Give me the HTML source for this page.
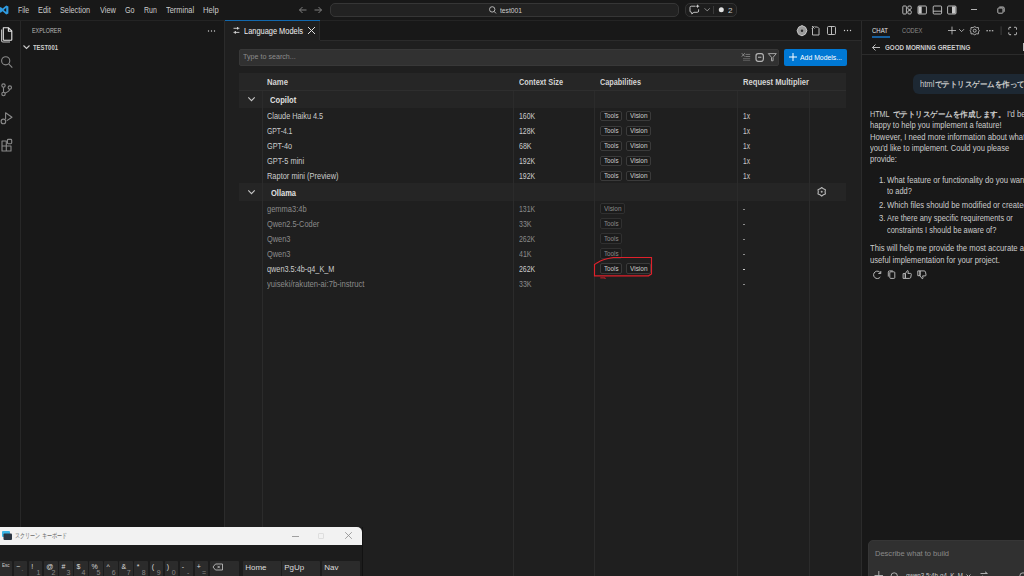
<!DOCTYPE html>
<html><head><meta charset="utf-8"><style>
html,body{margin:0;padding:0;width:1024px;height:576px;overflow:hidden;background:#181818;}
body{position:relative;font-family:"Liberation Sans", sans-serif;}
.a{position:absolute;}
.t{position:absolute;white-space:nowrap;line-height:1;transform-origin:0 50%;}
svg.a{overflow:visible;}
</style></head><body>
<div class="a" style="left:0px;top:0px;width:1024px;height:576px;background:#181818;"></div>
<div class="a" style="left:0px;top:20px;width:1024px;height:1px;background:#242424;"></div>
<div class="a" style="left:20px;top:21px;width:1px;height:555px;background:#272727;"></div>
<div class="a" style="left:224px;top:21px;width:1px;height:555px;background:#2b2b2b;"></div>
<div class="a" style="left:225px;top:40px;width:637px;height:536px;background:#1f1f1f;"></div>
<div class="a" style="left:225px;top:40px;width:637px;height:1px;background:#2b2b2b;"></div>
<div class="a" style="left:225px;top:20px;width:95px;height:21px;background:#1f1f1f;"></div>
<div class="a" style="left:225px;top:20px;width:95px;height:1px;background:#1268ad;"></div>
<div class="a" style="left:319px;top:21px;width:1px;height:19px;background:#2b2b2b;"></div>
<div class="a" style="left:861px;top:21px;width:1px;height:555px;background:#2b2b2b;"></div>
<svg class="a" style="left:0;top:0" width="12" height="20" viewBox="0 0 12 20"><path d="M6.2 5.4 L8.4 6.4 V13.4 L6.2 14.5 L2.6 11.3 L0.6 12.8 L-0.6 12.2 V7.7 L0.6 7.1 L2.6 8.6 Z M6.2 7.8 L3.7 9.95 L6.2 12.1 Z" fill="#2f9be0" fill-rule="evenodd"/></svg>
<svg class="a" style="left:298px;top:5px" width="26" height="10" viewBox="0 0 26 10"><path d="M1.5 5 H8.5 M1.5 5 L4.5 2 M1.5 5 L4.5 8" stroke="#8a8a8a" stroke-width="0.9" fill="none"/><path d="M23.5 5 H16.5 M23.5 5 L20.5 2 M23.5 5 L20.5 8" stroke="#8a8a8a" stroke-width="0.9" fill="none"/></svg>
<div class="a" style="left:330px;top:3px;width:349px;height:14px;background:#222222;border:1px solid #363636;box-sizing:border-box;border-radius:5px;"></div>
<svg class="a" style="left:487px;top:5px" width="10" height="10" viewBox="0 0 10 10"><circle cx="5.2" cy="4.4" r="2.7" stroke="#c4c4c4" stroke-width="0.9" fill="none"/><path d="M7.1 6.4 L9 8.4" stroke="#c4c4c4" stroke-width="0.9"/></svg>
<div class="a" style="left:685px;top:3px;width:52px;height:14px;background:#1d1d1d;border:1px solid #333333;box-sizing:border-box;border-radius:5px;"></div>
<svg class="a" style="left:0;top:0" width="740" height="20" viewBox="0 0 740 20"><path d="M695.5 6.2 H691.3 Q690 6.2 690 7.5 V11 Q690 12.3 691.3 12.3 H691.8 V14 L693.9 12.3 H697.3 Q698.6 12.3 698.6 11 V9.3" stroke="#d4d4d4" stroke-width="0.9" fill="none" stroke-linejoin="round"/><path d="M697.6 4.2 L698.2 5.6 L699.6 6.2 L698.2 6.8 L697.6 8.2 L697 6.8 L695.6 6.2 L697 5.6 Z" fill="#d4d4d4"/></svg>
<svg class="a" style="left:703px;top:7px" width="8" height="6" viewBox="0 0 8 6"><path d="M1.6 1.3 L4.2 3.9 L6.8 1.3" stroke="#aaaaaa" stroke-width="0.8" fill="none"/></svg>
<div class="a" style="left:713px;top:6px;width:1px;height:8px;background:#3a3a3a;"></div>
<svg class="a" style="left:718px;top:7px" width="7" height="7" viewBox="0 0 7 7"><circle cx="3.3" cy="2.8" r="2.5" fill="#e0e0e0"/></svg>
<svg class="a" style="left:900px;top:4px" width="60" height="12" viewBox="0 0 60 12">
<g stroke="#c8c8c8" stroke-width="0.9" fill="none">
<rect x="2.8" y="2" width="3.6" height="8" rx="0.8"/><rect x="7.8" y="2" width="3.5" height="3.4" rx="1.2"/><rect x="7.8" y="6.6" width="3.5" height="3.4" rx="1.2"/>
<rect x="18" y="2" width="8.4" height="8" rx="1"/>
<rect x="33.2" y="2" width="8.4" height="8" rx="1"/><path d="M33.2 7.2 H41.6"/>
<rect x="47.6" y="2" width="8.4" height="8" rx="1"/>
</g>
<rect x="18.5" y="2.5" width="3.2" height="7" fill="#c8c8c8"/>
<rect x="52" y="2.5" width="3.5" height="7" fill="#c8c8c8"/>
</svg>
<div class="a" style="left:971.4px;top:9px;width:5.8px;height:1px;background:#b4b4b4;"></div>
<svg class="a" style="left:996px;top:5px" width="10" height="10" viewBox="0 0 10 10"><rect x="1.8" y="3" width="5.2" height="5.2" rx="0.8" stroke="#c8c8c8" stroke-width="0.9" fill="none"/><path d="M3.3 2 H7 Q8.2 2 8.2 3.2 V6.8" stroke="#c8c8c8" stroke-width="0.9" fill="none"/></svg>
<svg class="a" style="left:0;top:0" width="20" height="160" viewBox="0 0 20 160">
<g fill="none" stroke-width="1.1" stroke-linejoin="round">
<path d="M3.3 27.8 H8.6 L11.8 31 V39.6 Q11.8 40.3 11.1 40.3 H4 Q3.3 40.3 3.3 39.6 Z" stroke="#e6e6e6"/>
<path d="M8.4 27.8 V31.2 H11.8" stroke="#e6e6e6"/>
<path d="M1.6 29.5 V40.5 Q1.6 42 3 42 H10" stroke="#bfbfbf"/>
<circle cx="5.7" cy="60.8" r="4.1" stroke="#8a8a8a"/><path d="M8.7 63.9 L12.3 67.6" stroke="#8a8a8a"/>
<circle cx="3.5" cy="85.6" r="1.7" stroke="#8a8a8a"/><circle cx="3.5" cy="94" r="1.7" stroke="#8a8a8a"/><circle cx="9.8" cy="87.6" r="1.7" stroke="#8a8a8a"/><path d="M3.5 87.3 V92.3 M9.8 89.3 Q9.6 91.2 5 93.2" stroke="#8a8a8a"/>
<path d="M5.6 119 V112.8 L12 117.3 L6.8 120.6" stroke="#8a8a8a"/><circle cx="3.4" cy="121.4" r="2.3" stroke="#8a8a8a"/>
<path d="M2 141 H6.3 V151 H2 Z M2 146 H11 V151 H6.3" stroke="#8a8a8a"/><rect x="7.4" y="139.4" width="4.3" height="4.3" rx="0.9" stroke="#8a8a8a"/>
</g></svg>
<svg class="a" style="left:206px;top:28px" width="12" height="6" viewBox="0 0 12 6"><circle cx="2.5" cy="3" r="0.7" fill="#cccccc"/><circle cx="5.5" cy="3" r="0.7" fill="#cccccc"/><circle cx="8.5" cy="3" r="0.7" fill="#cccccc"/></svg>
<svg class="a" style="left:22px;top:43px" width="9" height="8" viewBox="0 0 9 8"><path d="M1.5 2.5 L4.5 5.5 L7.5 2.5" stroke="#cccccc" stroke-width="1.1" fill="none"/></svg>
<svg class="a" style="left:0;top:0" width="260" height="40" viewBox="0 0 260 40"><path d="M233.5 28.3 H239.4 M233.5 32.4 H239.4" stroke="#d8d8d8" stroke-width="0.9"/><path d="M237.6 27 V29.6 M235.3 31.1 V33.7" stroke="#d8d8d8" stroke-width="1.1"/></svg>
<svg class="a" style="left:307px;top:26px" width="9" height="9" viewBox="0 0 9 9"><path d="M1 1 L8 8 M8 1 L1 8" stroke="#e0e0e0" stroke-width="1"/></svg>
<svg class="a" style="left:794px;top:24px" width="60" height="13" viewBox="0 0 60 13">
<g fill="none" stroke="#cccccc" stroke-width="0.9">
<path d="M8 1.6 L11.6 3.3 L12.9 6.7 L11.3 10.2 L8 11.8 L4.5 10.3 L3.1 6.7 L4.6 3.2 Z" fill="#9a9a9a" stroke="#c8c8c8" stroke-width="1" stroke-linejoin="round"/><circle cx="8" cy="6.7" r="1.2" fill="#2a2a2a" stroke="none"/>
<path d="M18.5 4 L18.5 11 H25 V4.5 L23.5 3 H21" /><path d="M18 2 L20.5 4.5 M18 4.5 L20.5 2"/>
<rect x="33.5" y="2.5" width="8" height="8" rx="1"/><path d="M37.5 2.5 V10.5"/>
</g>
<circle cx="50.5" cy="6.5" r="0.7" fill="#cccccc"/><circle cx="53.5" cy="6.5" r="0.7" fill="#cccccc"/><circle cx="56.5" cy="6.5" r="0.7" fill="#cccccc"/>
</svg>
<div class="a" style="left:239px;top:48.6px;width:540px;height:17.5px;background:#313131;border:1px solid #383838;box-sizing:border-box;border-radius:2px;"></div>
<svg class="a" style="left:0;top:0" width="1024" height="80" viewBox="0 0 1024 80">
<g fill="none" stroke-width="0.8">
<path d="M741.8 53.2 L744.8 56.6 M744.8 53.2 L741.8 56.6" stroke="#9a9a9a"/>
<path d="M745.5 54.4 H750.2 M745.5 56.5 H750.2" stroke="#8a8a8a"/>
<path d="M743 58.6 H750.2 M743 60.3 H750.2" stroke="#6a6a6a"/>
<rect x="756" y="53.7" width="7.4" height="7.6" rx="2.2" stroke="#b4b4b4" stroke-width="1.2"/>
<path d="M758 57.3 H761.4" stroke="#9a9a9a" stroke-width="1.3"/>
<path d="M768.3 53.6 H776.3 L773.1 57.3 V60.8 H771.5 V57.3 Z" stroke="#b0b0b0" stroke-width="0.9" stroke-linejoin="round"/>
</g></svg>
<div class="a" style="left:784px;top:49px;width:63px;height:17px;background:#0078d4;border-radius:2px;"></div>
<svg class="a" style="left:788px;top:52px" width="10" height="10" viewBox="0 0 10 10"><path d="M5 1 V9 M1 5 H9" stroke="#ffffff" stroke-width="1"/></svg>
<div class="a" style="left:239px;top:73px;width:607px;height:17.5px;background:#262626;"></div>
<div class="a" style="left:239px;top:90px;width:607px;height:1px;background:#2e2e2e;"></div>
<div class="a" style="left:239px;top:90.5px;width:607px;height:17.2px;background:#252525;"></div>
<div class="a" style="left:239px;top:183px;width:607px;height:17.7px;background:#252525;"></div>
<div class="a" style="left:262px;top:90.5px;width:1px;height:486px;background:#2b2b2b;"></div>
<div class="a" style="left:513px;top:90.5px;width:1px;height:486px;background:#2b2b2b;"></div>
<div class="a" style="left:594px;top:90.5px;width:1px;height:486px;background:#2b2b2b;"></div>
<div class="a" style="left:737px;top:90.5px;width:1px;height:486px;background:#2b2b2b;"></div>
<div class="a" style="left:809px;top:90.5px;width:1px;height:486px;background:#2b2b2b;"></div>
<svg class="a" style="left:247px;top:94.7px" width="9" height="8" viewBox="0 0 9 8"><path d="M1.3 2.4 L4.5 5.6 L7.7 2.4" stroke="#c8c8c8" stroke-width="1.1" fill="none"/></svg>
<svg class="a" style="left:247px;top:188px" width="9" height="8" viewBox="0 0 9 8"><path d="M1.3 2.4 L4.5 5.6 L7.7 2.4" stroke="#c8c8c8" stroke-width="1.1" fill="none"/></svg>
<svg class="a" style="left:0;top:0" width="1024" height="300" viewBox="0 0 1024 300"><path d="M821.70 187.50 L823.40 188.86 L825.42 189.65 L825.10 191.80 L825.42 193.95 L823.40 194.74 L821.70 196.10 L820.00 194.74 L817.98 193.95 L818.30 191.80 L817.98 189.65 L820.00 188.86 Z" stroke="#b8b8b8" stroke-width="1.1" fill="none" stroke-linejoin="round"/><circle cx="821.7" cy="191.8" r="1" fill="#b0b0b0"/></svg>
<div class="a" style="left:599.6px;top:110.60000000000001px;width:22.7px;height:10.4px;background:#1b1b1b;border:1px solid #3a3a3a;box-sizing:border-box;border-radius:2px;"></div>
<div class="a" style="left:625.5px;top:110.60000000000001px;width:25px;height:10.4px;background:#1b1b1b;border:1px solid #3a3a3a;box-sizing:border-box;border-radius:2px;"></div>
<div class="a" style="left:599.6px;top:125.60000000000001px;width:22.7px;height:10.4px;background:#1b1b1b;border:1px solid #3a3a3a;box-sizing:border-box;border-radius:2px;"></div>
<div class="a" style="left:625.5px;top:125.60000000000001px;width:25px;height:10.4px;background:#1b1b1b;border:1px solid #3a3a3a;box-sizing:border-box;border-radius:2px;"></div>
<div class="a" style="left:599.6px;top:140.6px;width:22.7px;height:10.4px;background:#1b1b1b;border:1px solid #3a3a3a;box-sizing:border-box;border-radius:2px;"></div>
<div class="a" style="left:625.5px;top:140.6px;width:25px;height:10.4px;background:#1b1b1b;border:1px solid #3a3a3a;box-sizing:border-box;border-radius:2px;"></div>
<div class="a" style="left:599.6px;top:155.6px;width:22.7px;height:10.4px;background:#1b1b1b;border:1px solid #3a3a3a;box-sizing:border-box;border-radius:2px;"></div>
<div class="a" style="left:625.5px;top:155.6px;width:25px;height:10.4px;background:#1b1b1b;border:1px solid #3a3a3a;box-sizing:border-box;border-radius:2px;"></div>
<div class="a" style="left:599.6px;top:170.6px;width:22.7px;height:10.4px;background:#1b1b1b;border:1px solid #3a3a3a;box-sizing:border-box;border-radius:2px;"></div>
<div class="a" style="left:625.5px;top:170.6px;width:25px;height:10.4px;background:#1b1b1b;border:1px solid #3a3a3a;box-sizing:border-box;border-radius:2px;"></div>
<div class="a" style="left:599.6px;top:203.39999999999998px;width:25px;height:10.4px;background:#1b1b1b;border:1px solid #303030;box-sizing:border-box;border-radius:2px;"></div>
<div class="a" style="left:743.3px;top:209.2px;width:2.2px;height:0.8px;background:#8b8b8b;"></div>
<div class="a" style="left:599.6px;top:218.39999999999998px;width:22.7px;height:10.4px;background:#1b1b1b;border:1px solid #303030;box-sizing:border-box;border-radius:2px;"></div>
<div class="a" style="left:743.3px;top:224.2px;width:2.2px;height:0.8px;background:#8b8b8b;"></div>
<div class="a" style="left:599.6px;top:233.39999999999998px;width:22.7px;height:10.4px;background:#1b1b1b;border:1px solid #303030;box-sizing:border-box;border-radius:2px;"></div>
<div class="a" style="left:743.3px;top:239.2px;width:2.2px;height:0.8px;background:#8b8b8b;"></div>
<div class="a" style="left:599.6px;top:248.39999999999998px;width:22.7px;height:10.4px;background:#1b1b1b;border:1px solid #303030;box-sizing:border-box;border-radius:2px;"></div>
<div class="a" style="left:743.3px;top:254.2px;width:2.2px;height:0.8px;background:#8b8b8b;"></div>
<div class="a" style="left:599.6px;top:263.4px;width:22.7px;height:10.4px;background:#1b1b1b;border:1px solid #3a3a3a;box-sizing:border-box;border-radius:2px;"></div>
<div class="a" style="left:625.5px;top:263.4px;width:25px;height:10.4px;background:#1b1b1b;border:1px solid #3a3a3a;box-sizing:border-box;border-radius:2px;"></div>
<div class="a" style="left:743.3px;top:269.2px;width:2.2px;height:0.8px;background:#cccccc;"></div>
<div class="a" style="left:743.3px;top:284.2px;width:2.2px;height:0.8px;background:#8b8b8b;"></div>
<svg class="a" style="left:0;top:0" width="1024" height="576" viewBox="0 0 1024 576" ><path d="M613.5 257.5 H651.5 V273.9 L648.5 275.8 H594.5 V264.6 L596.9 262.9 L600.3 260.9 L603.5 259.8 L607.1 258.8 L610.5 258 Z" stroke="#e0212b" stroke-width="1.15" fill="none" stroke-linejoin="miter"/><path d="M600.3 277.9 H605.1 V279" stroke="#c8202a" stroke-width="1" fill="none"/></svg>
<div class="a" style="left:871.5px;top:36.4px;width:18px;height:1.2px;background:#17609e;"></div>
<svg class="a" style="left:0;top:0" width="1024" height="60" viewBox="0 0 1024 60">
<g fill="none" stroke="#cccccc" stroke-width="0.8">
<path d="M952 26.6 V34.4 M948 30.5 H956"/>
<path d="M959.2 29.2 L961.6 31.6 L964 29.2"/>
<circle cx="974.7" cy="30.7" r="1.5"/>
<path d="M974.7 26.6 L976.4 27.6 L978.4 27.5 L978.5 29.5 L979.3 30.7 L978.5 31.9 L978.4 33.9 L976.4 33.8 L974.7 34.8 L973 33.8 L971 33.9 L970.9 31.9 L970.1 30.7 L970.9 29.5 L971 27.5 L973 27.6 Z" stroke-linejoin="round"/>
<path d="M1001.1 26.4 V35" stroke="#3e3e3e" stroke-width="1"/>
<path d="M1008.8 29.6 V28.2 Q1008.8 27.3 1009.7 27.3 H1011.1 M1014.2 27.3 H1015.6 Q1016.5 27.3 1016.5 28.2 V29.6 M1016.5 32.4 V33.8 Q1016.5 34.7 1015.6 34.7 H1014.2 M1011.1 34.7 H1009.7 Q1008.8 34.7 1008.8 33.8 V32.4" stroke-width="1"/>
</g>
<rect x="986.4" y="30.2" width="1.5" height="1.1" fill="#cccccc"/><rect x="989.1" y="30.2" width="1.5" height="1.1" fill="#cccccc"/><rect x="991.8" y="30.2" width="1.5" height="1.1" fill="#cccccc"/>
</svg>
<svg class="a" style="left:871px;top:43px" width="10" height="9" viewBox="0 0 10 9"><path d="M1.5 4.5 H9 M1.5 4.5 L4.5 1.5 M1.5 4.5 L4.5 7.5" stroke="#cccccc" stroke-width="0.9" fill="none"/></svg>
<div class="a" style="left:1022.5px;top:43.4px;width:2px;height:7.4px;background:#bdbdbd;"></div>
<div class="a" style="left:862px;top:54px;width:162px;height:1px;background:#2b2b2b;"></div>
<div class="a" style="left:912.7px;top:73.6px;width:130px;height:20.8px;background:#1d2833;border-radius:6px;"></div>
<svg class="a" style="left:0;top:0" width="1024" height="300" viewBox="0 0 1024 300">
<g fill="none" stroke="#c4c4c4" stroke-width="0.9" stroke-linejoin="round">
<path d="M880.6 273.2 A3.7 3.7 0 1 0 880.3 277"/><path d="M880.8 271 V273.5 H878.3"/>
<rect x="889.8" y="271.8" width="5" height="6.6" rx="0.9"/><path d="M888.3 276.6 V272.2 Q888.3 270.9 889.6 270.9 H892.8"/>
<path d="M905.3 278.4 H909.4 Q910.6 278.4 910.8 277.2 L911.3 274.4 Q911.4 273.4 910.4 273.4 H907.9 L908.3 271.6 Q908.3 270.5 907.4 270.6 L905.3 273.6 Z M903.1 273.6 H905.3 V278.4 H903.1 Z"/>
<path d="M920 270.9 H924.1 Q925.3 270.9 925.5 272.1 L926 274.9 Q926.1 275.9 925.1 275.9 H922.6 L923 277.7 Q923 278.8 922.1 278.7 L920 275.7 Z M917.8 270.9 H920 V275.7 H917.8 Z"/>
</g></svg>
<div class="a" style="left:868px;top:540px;width:170px;height:50px;background:#303030;border:1px solid #363636;box-sizing:border-box;border-radius:5px;"></div>
<svg class="a" style="left:0;top:0" width="1024" height="576" viewBox="0 0 1024 576">
<g fill="none" stroke="#bbbbbb" stroke-width="0.9">
<path d="M878.8 571 V580 M874.5 575.5 H883"/>
<circle cx="894.2" cy="576" r="3.2"/>
<path d="M966.5 574.5 L968.5 576.5 L970.5 574.5" />
<path d="M980.5 573.5 H987.4 M985 571.8 L987.4 573.5 M980.5 577.5 H987.4 M982.9 575.8 L980.5 577.5"/>
<circle cx="1023" cy="576" r="3.2"/>
</g></svg>
<div class="a" style="left:0px;top:527px;width:362px;height:49px;background:#1c1c1c;border-radius:0 5px 0 0;"></div>
<div class="a" style="left:0px;top:527px;width:362px;height:17.5px;background:#f2f2f2;border-radius:0 5px 0 0;"></div>
<svg class="a" style="left:1px;top:530px" width="12" height="11" viewBox="0 0 12 11"><rect x="1" y="1" width="8" height="6" rx="1" fill="#3ab5e6"/><rect x="2.5" y="3.5" width="8.5" height="6.5" rx="1" fill="#2a3542"/></svg>
<div class="a" style="left:292px;top:535.6px;width:6.6px;height:0.8px;background:#a0a0a0;"></div>
<div class="a" style="left:318px;top:532.5px;width:6px;height:6px;border:1px solid #dedede;box-sizing:border-box;border-radius:1px;"></div>
<svg class="a" style="left:344px;top:531px" width="9" height="9" viewBox="0 0 9 9"><path d="M1.2 1.2 L7.8 7.8 M7.8 1.2 L1.2 7.8" stroke="#8c8c8c" stroke-width="0.8"/></svg>
<div class="a" style="left:362px;top:527px;width:1px;height:49px;background:#121212;"></div>
<div class="a" style="left:-1.0px;top:561.2px;width:13px;height:20px;background:#2b2b2b;border-radius:1px;"></div>
<div class="a" style="left:14.05px;top:561.2px;width:13.4px;height:20px;background:#2b2b2b;border-radius:1px;"></div>
<div class="a" style="left:29.1px;top:561.2px;width:13.4px;height:20px;background:#2b2b2b;border-radius:1px;"></div>
<div class="a" style="left:44.150000000000006px;top:561.2px;width:13.4px;height:20px;background:#2b2b2b;border-radius:1px;"></div>
<div class="a" style="left:59.2px;top:561.2px;width:13.4px;height:20px;background:#2b2b2b;border-radius:1px;"></div>
<div class="a" style="left:74.25px;top:561.2px;width:13.4px;height:20px;background:#2b2b2b;border-radius:1px;"></div>
<div class="a" style="left:89.30000000000001px;top:561.2px;width:13.4px;height:20px;background:#2b2b2b;border-radius:1px;"></div>
<div class="a" style="left:104.35000000000001px;top:561.2px;width:13.4px;height:20px;background:#2b2b2b;border-radius:1px;"></div>
<div class="a" style="left:119.4px;top:561.2px;width:13.4px;height:20px;background:#2b2b2b;border-radius:1px;"></div>
<div class="a" style="left:134.45000000000002px;top:561.2px;width:13.4px;height:20px;background:#2b2b2b;border-radius:1px;"></div>
<div class="a" style="left:149.5px;top:561.2px;width:13.4px;height:20px;background:#2b2b2b;border-radius:1px;"></div>
<div class="a" style="left:164.55px;top:561.2px;width:13.4px;height:20px;background:#2b2b2b;border-radius:1px;"></div>
<div class="a" style="left:179.60000000000002px;top:561.2px;width:13.4px;height:20px;background:#2b2b2b;border-radius:1px;"></div>
<div class="a" style="left:194.65px;top:561.2px;width:13.4px;height:20px;background:#2b2b2b;border-radius:1px;"></div>
<div class="a" style="left:210px;top:561.2px;width:28.6px;height:20px;background:#2b2b2b;border-radius:1px;"></div>
<svg class="a" style="left:212px;top:563px" width="12" height="8" viewBox="0 0 12 8"><path d="M3.5 1 H10.5 V7 H3.5 L1 4 Z M5.5 2.8 L7.8 5.2 M7.8 2.8 L5.5 5.2" stroke="#cccccc" stroke-width="0.8" fill="none"/></svg>
<div class="a" style="left:243px;top:561.2px;width:37.5px;height:20px;background:#2b2b2b;border-radius:1px;"></div>
<div class="a" style="left:282px;top:561.2px;width:37.5px;height:20px;background:#2b2b2b;border-radius:1px;"></div>
<div class="a" style="left:322px;top:561.2px;width:38px;height:20px;background:#2b2b2b;border-radius:1px;"></div>
<div class="t" id="t0" style="left:17.60px;top:5.65px;font-size:8.6px;color:#cccccc;font-weight:normal;transform:scaleX(0.8081);">File</div>
<div class="t" id="t1" style="left:38.20px;top:5.65px;font-size:8.6px;color:#cccccc;font-weight:normal;transform:scaleX(0.8574);">Edit</div>
<div class="t" id="t2" style="left:60.20px;top:5.65px;font-size:8.6px;color:#cccccc;font-weight:normal;transform:scaleX(0.8484);">Selection</div>
<div class="t" id="t3" style="left:99.60px;top:5.65px;font-size:8.6px;color:#cccccc;font-weight:normal;transform:scaleX(0.8602);">View</div>
<div class="t" id="t4" style="left:124.70px;top:5.65px;font-size:8.6px;color:#cccccc;font-weight:normal;transform:scaleX(0.8371);">Go</div>
<div class="t" id="t5" style="left:143.70px;top:5.65px;font-size:8.6px;color:#cccccc;font-weight:normal;transform:scaleX(0.8119);">Run</div>
<div class="t" id="t6" style="left:165.90px;top:5.65px;font-size:8.6px;color:#cccccc;font-weight:normal;transform:scaleX(0.8650);">Terminal</div>
<div class="t" id="t7" style="left:203.40px;top:5.65px;font-size:8.6px;color:#cccccc;font-weight:normal;transform:scaleX(0.8876);">Help</div>
<div class="t" id="t8" style="left:500.00px;top:6.70px;font-size:8px;color:#cccccc;font-weight:normal;transform:scaleX(0.8381);">test001</div>
<div class="t" id="t9" style="left:728.00px;top:6.70px;font-size:8px;color:#cccccc;font-weight:normal;transform:scaleX(1.0105);">2</div>
<div class="t" id="t10" style="left:32.10px;top:27.15px;font-size:7.2px;color:#bbbbbb;font-weight:normal;transform:scaleX(0.7483);">EXPLORER</div>
<div class="t" id="t11" style="left:32.50px;top:44.00px;font-size:7px;color:#cccccc;font-weight:bold;transform:scaleX(0.8452);">TEST001</div>
<div class="t" id="t12" style="left:243.90px;top:27.30px;font-size:8.4px;color:#f0f0f0;font-weight:normal;transform:scaleX(0.8860);">Language Models</div>
<div class="t" id="t13" style="left:243.10px;top:53.40px;font-size:7.8px;color:#8c8c8c;font-weight:normal;transform:scaleX(0.9160);">Type to search...</div>
<div class="t" id="t14" style="left:800.00px;top:54.35px;font-size:7.5px;color:#ffffff;font-weight:normal;transform:scaleX(0.9158);">Add Models...</div>
<div class="t" id="t15" style="left:267.00px;top:78.65px;font-size:8.2px;color:#d4d4d4;font-weight:bold;transform:scaleX(0.9412);">Name</div>
<div class="t" id="t16" style="left:518.70px;top:78.65px;font-size:8.2px;color:#d4d4d4;font-weight:bold;transform:scaleX(0.8954);">Context Size</div>
<div class="t" id="t17" style="left:599.50px;top:78.65px;font-size:8.2px;color:#d4d4d4;font-weight:bold;transform:scaleX(0.8919);">Capabilities</div>
<div class="t" id="t18" style="left:743.00px;top:78.65px;font-size:8.2px;color:#d4d4d4;font-weight:bold;transform:scaleX(0.9300);">Request Multiplier</div>
<div class="t" id="t19" style="left:270.30px;top:95.80px;font-size:8.4px;color:#e0e0e0;font-weight:bold;transform:scaleX(0.9083);">Copilot</div>
<div class="t" id="t20" style="left:270.50px;top:188.90px;font-size:8.4px;color:#e0e0e0;font-weight:bold;transform:scaleX(0.8949);">Ollama</div>
<div class="t" id="t21" style="left:266.90px;top:113.30px;font-size:8.2px;color:#cccccc;font-weight:normal;transform:scaleX(0.8947);">Claude Haiku 4.5</div>
<div class="t" id="t22" style="left:518.80px;top:113.30px;font-size:8.2px;color:#cccccc;font-weight:normal;transform:scaleX(0.8418);">160K</div>
<div class="t" id="t23" style="left:603.80px;top:112.20px;font-size:7.2px;color:#cccccc;font-weight:normal;transform:scaleX(0.8641);">Tools</div>
<div class="t" id="t24" style="left:629.50px;top:112.20px;font-size:7.2px;color:#cccccc;font-weight:normal;transform:scaleX(0.8996);">Vision</div>
<div class="t" id="t25" style="left:743.30px;top:113.30px;font-size:8.2px;color:#cccccc;font-weight:normal;transform:scaleX(0.8087);">1x</div>
<div class="t" id="t26" style="left:266.90px;top:128.30px;font-size:8.2px;color:#cccccc;font-weight:normal;transform:scaleX(0.8328);">GPT-4.1</div>
<div class="t" id="t27" style="left:518.80px;top:128.30px;font-size:8.2px;color:#cccccc;font-weight:normal;transform:scaleX(0.8418);">128K</div>
<div class="t" id="t28" style="left:603.80px;top:127.20px;font-size:7.2px;color:#cccccc;font-weight:normal;transform:scaleX(0.8641);">Tools</div>
<div class="t" id="t29" style="left:629.50px;top:127.20px;font-size:7.2px;color:#cccccc;font-weight:normal;transform:scaleX(0.8996);">Vision</div>
<div class="t" id="t30" style="left:743.30px;top:128.30px;font-size:8.2px;color:#cccccc;font-weight:normal;transform:scaleX(0.8087);">1x</div>
<div class="t" id="t31" style="left:266.90px;top:143.30px;font-size:8.2px;color:#cccccc;font-weight:normal;transform:scaleX(0.8859);">GPT-4o</div>
<div class="t" id="t32" style="left:518.80px;top:143.30px;font-size:8.2px;color:#cccccc;font-weight:normal;transform:scaleX(0.8643);">68K</div>
<div class="t" id="t33" style="left:603.80px;top:142.20px;font-size:7.2px;color:#cccccc;font-weight:normal;transform:scaleX(0.8641);">Tools</div>
<div class="t" id="t34" style="left:629.50px;top:142.20px;font-size:7.2px;color:#cccccc;font-weight:normal;transform:scaleX(0.8996);">Vision</div>
<div class="t" id="t35" style="left:743.30px;top:143.30px;font-size:8.2px;color:#cccccc;font-weight:normal;transform:scaleX(0.8087);">1x</div>
<div class="t" id="t36" style="left:266.90px;top:158.30px;font-size:8.2px;color:#cccccc;font-weight:normal;transform:scaleX(0.9059);">GPT-5 mini</div>
<div class="t" id="t37" style="left:518.80px;top:158.30px;font-size:8.2px;color:#cccccc;font-weight:normal;transform:scaleX(0.8418);">192K</div>
<div class="t" id="t38" style="left:603.80px;top:157.20px;font-size:7.2px;color:#cccccc;font-weight:normal;transform:scaleX(0.8641);">Tools</div>
<div class="t" id="t39" style="left:629.50px;top:157.20px;font-size:7.2px;color:#cccccc;font-weight:normal;transform:scaleX(0.8996);">Vision</div>
<div class="t" id="t40" style="left:743.30px;top:158.30px;font-size:8.2px;color:#cccccc;font-weight:normal;transform:scaleX(0.8087);">1x</div>
<div class="t" id="t41" style="left:266.90px;top:173.30px;font-size:8.2px;color:#cccccc;font-weight:normal;transform:scaleX(0.9083);">Raptor mini (Preview)</div>
<div class="t" id="t42" style="left:518.80px;top:173.30px;font-size:8.2px;color:#cccccc;font-weight:normal;transform:scaleX(0.8418);">192K</div>
<div class="t" id="t43" style="left:603.80px;top:172.20px;font-size:7.2px;color:#cccccc;font-weight:normal;transform:scaleX(0.8641);">Tools</div>
<div class="t" id="t44" style="left:629.50px;top:172.20px;font-size:7.2px;color:#cccccc;font-weight:normal;transform:scaleX(0.8996);">Vision</div>
<div class="t" id="t45" style="left:743.30px;top:173.30px;font-size:8.2px;color:#cccccc;font-weight:normal;transform:scaleX(0.8087);">1x</div>
<div class="t" id="t46" style="left:266.90px;top:206.10px;font-size:8.2px;color:#8b8b8b;font-weight:normal;transform:scaleX(0.9156);">gemma3:4b</div>
<div class="t" id="t47" style="left:518.80px;top:206.10px;font-size:8.2px;color:#8b8b8b;font-weight:normal;transform:scaleX(0.8418);">131K</div>
<div class="t" id="t48" style="left:603.60px;top:205.00px;font-size:7.2px;color:#8b8b8b;font-weight:normal;transform:scaleX(0.8996);">Vision</div>
<div class="t" id="t49" style="left:266.90px;top:221.10px;font-size:8.2px;color:#8b8b8b;font-weight:normal;transform:scaleX(0.9032);">Qwen2.5-Coder</div>
<div class="t" id="t50" style="left:518.80px;top:221.10px;font-size:8.2px;color:#8b8b8b;font-weight:normal;transform:scaleX(0.8643);">33K</div>
<div class="t" id="t51" style="left:603.80px;top:220.00px;font-size:7.2px;color:#8b8b8b;font-weight:normal;transform:scaleX(0.8641);">Tools</div>
<div class="t" id="t52" style="left:266.90px;top:236.10px;font-size:8.2px;color:#8b8b8b;font-weight:normal;transform:scaleX(0.9055);">Qwen3</div>
<div class="t" id="t53" style="left:518.80px;top:236.10px;font-size:8.2px;color:#8b8b8b;font-weight:normal;transform:scaleX(0.8418);">262K</div>
<div class="t" id="t54" style="left:603.80px;top:235.00px;font-size:7.2px;color:#8b8b8b;font-weight:normal;transform:scaleX(0.8641);">Tools</div>
<div class="t" id="t55" style="left:266.90px;top:251.10px;font-size:8.2px;color:#8b8b8b;font-weight:normal;transform:scaleX(0.9055);">Qwen3</div>
<div class="t" id="t56" style="left:518.80px;top:251.10px;font-size:8.2px;color:#8b8b8b;font-weight:normal;transform:scaleX(0.8643);">41K</div>
<div class="t" id="t57" style="left:603.80px;top:250.00px;font-size:7.2px;color:#8b8b8b;font-weight:normal;transform:scaleX(0.8641);">Tools</div>
<div class="t" id="t58" style="left:266.90px;top:266.10px;font-size:8.2px;color:#cccccc;font-weight:normal;transform:scaleX(0.8920);">qwen3.5:4b-q4_K_M</div>
<div class="t" id="t59" style="left:518.80px;top:266.10px;font-size:8.2px;color:#cccccc;font-weight:normal;transform:scaleX(0.8418);">262K</div>
<div class="t" id="t60" style="left:603.80px;top:265.00px;font-size:7.2px;color:#cccccc;font-weight:normal;transform:scaleX(0.8641);">Tools</div>
<div class="t" id="t61" style="left:629.50px;top:265.00px;font-size:7.2px;color:#cccccc;font-weight:normal;transform:scaleX(0.8996);">Vision</div>
<div class="t" id="t62" style="left:266.90px;top:281.10px;font-size:8.2px;color:#8b8b8b;font-weight:normal;transform:scaleX(0.9346);">yuiseki/rakuten-ai:7b-instruct</div>
<div class="t" id="t63" style="left:518.80px;top:281.10px;font-size:8.2px;color:#8b8b8b;font-weight:normal;transform:scaleX(0.8643);">33K</div>
<div class="t" id="t64" style="left:872.40px;top:27.10px;font-size:7.2px;color:#e0e0e0;font-weight:normal;transform:scaleX(0.8355);">CHAT</div>
<div class="t" id="t65" style="left:902.00px;top:27.10px;font-size:7.2px;color:#8b8b8b;font-weight:normal;transform:scaleX(0.7980);">CODEX</div>
<div class="t" id="t66" style="left:884.90px;top:43.85px;font-size:7px;color:#cccccc;font-weight:bold;transform:scaleX(0.8916);">GOOD MORNING GREETING</div>
<div class="t" id="t67" style="left:920.00px;top:80.60px;font-size:8.2px;color:#cccccc;font-weight:normal;transform:scaleX(0.9309);">html</div>
<div class="t" id="t68" style="left:935.00px;top:80.90px;font-size:7.6px;color:#cccccc;font-weight:bold;transform:scaleX(0.9333);">でテトリスゲームを作って</div>
<div class="t" id="t69" style="left:870.40px;top:110.60px;font-size:8.2px;color:#cccccc;font-weight:normal;transform:scaleX(0.8746);">HTML</div>
<div class="t" id="t70" style="left:1006.50px;top:110.60px;font-size:8.2px;color:#cccccc;font-weight:normal;transform:scaleX(0.9400);">I'd be</div>
<div class="t" id="t71" style="left:870.40px;top:122.30px;font-size:8.2px;color:#cccccc;font-weight:normal;transform:scaleX(0.9296);">happy to help you implement a feature!</div>
<div class="t" id="t72" style="left:870.40px;top:133.60px;font-size:8.2px;color:#cccccc;font-weight:normal;transform:scaleX(0.9400);">However, I need more information about what</div>
<div class="t" id="t73" style="left:870.40px;top:144.90px;font-size:8.2px;color:#cccccc;font-weight:normal;transform:scaleX(0.9228);">you'd like to implement. Could you please</div>
<div class="t" id="t74" style="left:870.40px;top:156.20px;font-size:8.2px;color:#cccccc;font-weight:normal;transform:scaleX(0.9231);">provide:</div>
<div class="t" id="t75" style="left:879.00px;top:176.80px;font-size:8.2px;color:#cccccc;font-weight:normal;transform:scaleX(0.9400);">1.</div>
<div class="t" id="t76" style="left:886.90px;top:176.80px;font-size:8.2px;color:#cccccc;font-weight:normal;transform:scaleX(0.9400);">What feature or functionality do you want</div>
<div class="t" id="t77" style="left:886.90px;top:187.90px;font-size:8.2px;color:#cccccc;font-weight:normal;transform:scaleX(0.9075);">to add?</div>
<div class="t" id="t78" style="left:879.00px;top:201.90px;font-size:8.2px;color:#cccccc;font-weight:normal;transform:scaleX(0.9400);">2.</div>
<div class="t" id="t79" style="left:886.90px;top:201.90px;font-size:8.2px;color:#cccccc;font-weight:normal;transform:scaleX(0.9400);">Which files should be modified or created</div>
<div class="t" id="t80" style="left:879.00px;top:214.90px;font-size:8.2px;color:#cccccc;font-weight:normal;transform:scaleX(0.9400);">3.</div>
<div class="t" id="t81" style="left:886.90px;top:214.90px;font-size:8.2px;color:#cccccc;font-weight:normal;transform:scaleX(0.9093);">Are there any specific requirements or</div>
<div class="t" id="t82" style="left:886.90px;top:226.50px;font-size:8.2px;color:#cccccc;font-weight:normal;transform:scaleX(0.9096);">constraints I should be aware of?</div>
<div class="t" id="t83" style="left:870.40px;top:245.30px;font-size:8.2px;color:#cccccc;font-weight:normal;transform:scaleX(0.9400);">This will help me provide the most accurate and</div>
<div class="t" id="t84" style="left:870.40px;top:256.90px;font-size:8.2px;color:#cccccc;font-weight:normal;transform:scaleX(0.9351);">useful implementation for your project.</div>
<div class="t" id="t85" style="left:892.60px;top:110.60px;font-size:7.6px;color:#cccccc;font-weight:bold;transform:scaleX(0.9333);">でテトリスゲームを作成します。</div>
<div class="t" id="t86" style="left:874.70px;top:550.40px;font-size:7.6px;color:#8a8a8a;font-weight:normal;transform:scaleX(0.9904);">Describe what to build</div>
<div class="t" id="t87" style="left:906.00px;top:571.70px;font-size:7.6px;color:#cccccc;font-weight:normal;transform:scaleX(0.8132);">qwen3.5:4b-q4_K_M</div>
<div class="t" id="t88" style="left:14.80px;top:532.40px;font-size:7.4px;color:#666666;font-weight:normal;transform:scaleX(0.7271);">スクリーン キーボード</div>
<div class="t" id="t89" style="left:1.80px;top:563.10px;font-size:5.2px;color:#cccccc;font-weight:normal;transform:scaleX(0.8780);">Esc</div>
<div class="t" id="t90" style="left:16.25px;top:563.20px;font-size:7px;color:#dddddd;font-weight:normal;">~</div>
<div class="t" id="t91" style="left:21.35px;top:568.50px;font-size:7px;color:#8a8a8a;font-weight:normal;">`</div>
<div class="t" id="t92" style="left:31.30px;top:563.20px;font-size:7px;color:#dddddd;font-weight:normal;">!</div>
<div class="t" id="t93" style="left:36.40px;top:568.50px;font-size:7px;color:#8a8a8a;font-weight:normal;">1</div>
<div class="t" id="t94" style="left:46.35px;top:563.20px;font-size:7px;color:#dddddd;font-weight:normal;">@</div>
<div class="t" id="t95" style="left:51.45px;top:568.50px;font-size:7px;color:#8a8a8a;font-weight:normal;">2</div>
<div class="t" id="t96" style="left:61.40px;top:563.20px;font-size:7px;color:#dddddd;font-weight:normal;">#</div>
<div class="t" id="t97" style="left:66.50px;top:568.50px;font-size:7px;color:#8a8a8a;font-weight:normal;">3</div>
<div class="t" id="t98" style="left:76.45px;top:563.20px;font-size:7px;color:#dddddd;font-weight:normal;">$</div>
<div class="t" id="t99" style="left:81.55px;top:568.50px;font-size:7px;color:#8a8a8a;font-weight:normal;">4</div>
<div class="t" id="t100" style="left:91.50px;top:563.20px;font-size:7px;color:#dddddd;font-weight:normal;">%</div>
<div class="t" id="t101" style="left:96.60px;top:568.50px;font-size:7px;color:#8a8a8a;font-weight:normal;">5</div>
<div class="t" id="t102" style="left:106.55px;top:563.20px;font-size:7px;color:#dddddd;font-weight:normal;">^</div>
<div class="t" id="t103" style="left:111.65px;top:568.50px;font-size:7px;color:#8a8a8a;font-weight:normal;">6</div>
<div class="t" id="t104" style="left:121.60px;top:563.20px;font-size:7px;color:#dddddd;font-weight:normal;">&amp;</div>
<div class="t" id="t105" style="left:126.70px;top:568.50px;font-size:7px;color:#8a8a8a;font-weight:normal;">7</div>
<div class="t" id="t106" style="left:136.65px;top:563.20px;font-size:7px;color:#dddddd;font-weight:normal;">*</div>
<div class="t" id="t107" style="left:141.75px;top:568.50px;font-size:7px;color:#8a8a8a;font-weight:normal;">8</div>
<div class="t" id="t108" style="left:151.70px;top:563.20px;font-size:7px;color:#dddddd;font-weight:normal;">(</div>
<div class="t" id="t109" style="left:156.80px;top:568.50px;font-size:7px;color:#8a8a8a;font-weight:normal;">9</div>
<div class="t" id="t110" style="left:166.75px;top:563.20px;font-size:7px;color:#dddddd;font-weight:normal;">)</div>
<div class="t" id="t111" style="left:171.85px;top:568.50px;font-size:7px;color:#8a8a8a;font-weight:normal;">0</div>
<div class="t" id="t112" style="left:181.80px;top:563.20px;font-size:7px;color:#dddddd;font-weight:normal;">-</div>
<div class="t" id="t113" style="left:186.90px;top:568.50px;font-size:7px;color:#8a8a8a;font-weight:normal;">-</div>
<div class="t" id="t114" style="left:196.85px;top:563.20px;font-size:7px;color:#dddddd;font-weight:normal;">+</div>
<div class="t" id="t115" style="left:201.95px;top:568.50px;font-size:7px;color:#8a8a8a;font-weight:normal;">=</div>
<div class="t" id="t116" style="left:245.20px;top:563.50px;font-size:8px;color:#dddddd;font-weight:normal;">Home</div>
<div class="t" id="t117" style="left:284.20px;top:563.50px;font-size:8px;color:#dddddd;font-weight:normal;">PgUp</div>
<div class="t" id="t118" style="left:324.20px;top:563.50px;font-size:8px;color:#dddddd;font-weight:normal;">Nav</div>
</body></html>
